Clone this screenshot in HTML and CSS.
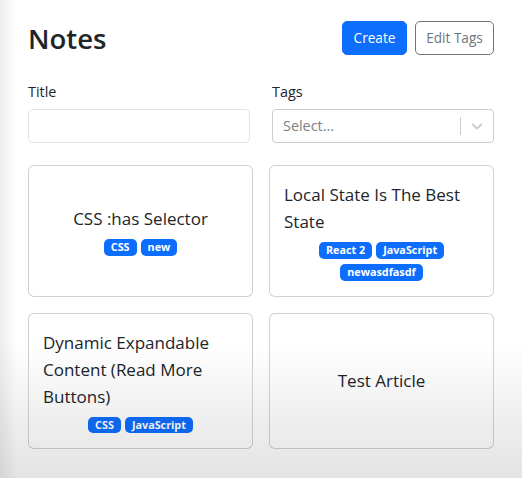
FILE: index.html
```html
<!DOCTYPE html>
<html lang="en">
<head>
<meta charset="utf-8">
<title>Notes</title>
<link rel="stylesheet" href="styles.css">
</head>
<body>
<div class="page">
  <header class="header">
    <h1 class="title">Notes</h1>
    <div class="actions">
      <button class="btn btn-primary">Create</button>
      <button class="btn btn-outline">Edit Tags</button>
    </div>
  </header>

  <form class="filters">
    <div class="field">
      <label class="label">Title</label>
      <input class="input" type="text">
    </div>
    <div class="field">
      <label class="label">Tags</label>
      <div class="select">
        <span class="placeholder">Select...</span>
        <span class="indicators">
          <span class="separator"></span>
          <span class="chevron">
            <svg viewBox="0 0 20 20" width="18" height="18" aria-hidden="true"><path d="M4.516 7.548c0.436-0.446 1.043-0.481 1.576 0l3.908 3.747 3.908-3.747c0.533-0.481 1.141-0.446 1.574 0 0.436 0.445 0.408 1.197 0 1.615-0.406 0.418-4.695 4.502-4.695 4.502-0.217 0.223-0.502 0.335-0.787 0.335s-0.57-0.112-0.789-0.335c0 0-4.287-4.084-4.695-4.502s-0.436-1.170 0-1.615z"/></svg>
          </span>
        </span>
      </div>
    </div>
  </form>

  <div class="grid">
    <a class="card">
      <div class="card-body">
        <span class="card-title">CSS :has Selector</span>
        <div class="badges">
          <span class="badge">CSS</span>
          <span class="badge">new</span>
        </div>
      </div>
    </a>
    <a class="card">
      <div class="card-body">
        <span class="card-title">Local State Is The Best State</span>
        <div class="badges">
          <span class="badge">React 2</span>
          <span class="badge">JavaScript</span>
          <span class="badge">newasdfasdf</span>
        </div>
      </div>
    </a>
    <a class="card">
      <div class="card-body">
        <span class="card-title">Dynamic Expandable Content (Read More Buttons)</span>
        <div class="badges">
          <span class="badge">CSS</span>
          <span class="badge">JavaScript</span>
        </div>
      </div>
    </a>
    <a class="card">
      <div class="card-body">
        <span class="card-title">Test Article</span>
      </div>
    </a>
  </div>
</div>
<div class="shade"></div>
</body>
</html>
```

FILE: styles.css
```css
* { box-sizing: border-box; }

html, body {
  margin: 0;
  height: 100%;
}

body {
  font-family: "Open Sans", "Noto Sans", sans-serif;
  font-size: 14.4px;
  line-height: 1.5;
  color: #212529;
  background: linear-gradient(to right, #eeeeee 0, #f6f6f6 8px, #ffffff 16px);
}

.page {
  padding: 21px 28px 0 28px;
  width: 522px;
}

.header {
  display: flex;
  align-items: center;
  justify-content: space-between;
  height: 34px;
}

.title {
  margin: 0;
  font-size: 27.5px;
  font-weight: 600;
  line-height: 1.2;
}

.actions {
  display: flex;
  gap: 8px;
}

.btn {
  font-family: inherit;
  font-size: 13.6px;
  line-height: 21.6px;
  height: 34px;
  padding: 5px 10px;
  border-radius: 5px;
  border: 1px solid transparent;
  background: none;
  white-space: nowrap;
}

.btn-primary {
  background: #0d6efd;
  border-color: #0d6efd;
  color: #fff;
  width: 65px;
}

.btn-outline {
  border-color: #6c757d;
  color: #6c757d;
  width: 79px;
}

.filters {
  display: grid;
  grid-template-columns: 222px 222px;
  column-gap: 22px;
  margin-top: 26px;
}

.field {
  display: flex;
  flex-direction: column;
}

.label {
  line-height: 22px;
  margin-bottom: 6px;
}

.input {
  height: 34px;
  border: 1px solid #dee2e6;
  border-radius: 5px;
  font: inherit;
  background: #fff;
}

.select {
  height: 34px;
  border: 1px solid #cccccc;
  border-radius: 4px;
  display: flex;
  align-items: center;
  justify-content: space-between;
  background: #fff;
}

.placeholder {
  color: #808080;
  padding-left: 10px;
}

.indicators {
  display: flex;
  align-items: center;
  align-self: stretch;
}

.separator {
  width: 1px;
  align-self: stretch;
  margin: 7px 0;
  background: #cccccc;
}

.chevron {
  display: flex;
  padding: 0 7px;
  fill: #cccccc;
}

.grid {
  display: grid;
  grid-template-columns: 225px 225px;
  gap: 16px;
  margin-top: 22px;
}

.card {
  display: flex;
  border: 1px solid rgba(0, 0, 0, 0.175);
  border-radius: 6px;
  background: #fff;
  color: inherit;
  text-decoration: none;
}

.card-body {
  flex: 1;
  padding: 15px 14px;
  display: flex;
  flex-direction: column;
  align-items: center;
  justify-content: center;
  gap: 7px;
}

.card-title {
  font-size: 17px;
  line-height: 27px;
}

.badges {
  display: flex;
  flex-wrap: wrap;
  justify-content: center;
  gap: 5px 4px;
}

.badge {
  background: #0d6efd;
  color: #fff;
  font-size: 10.8px;
  font-weight: 700;
  line-height: 1;
  padding: 3px 7px;
  border-radius: 5px;
}

.shade {
  position: fixed;
  inset: 0;
  pointer-events: none;
  background: linear-gradient(to bottom, rgba(0,0,0,0) 0, rgba(0,0,0,0) 340px, rgba(0,0,0,0.11) 478px);
}
```
